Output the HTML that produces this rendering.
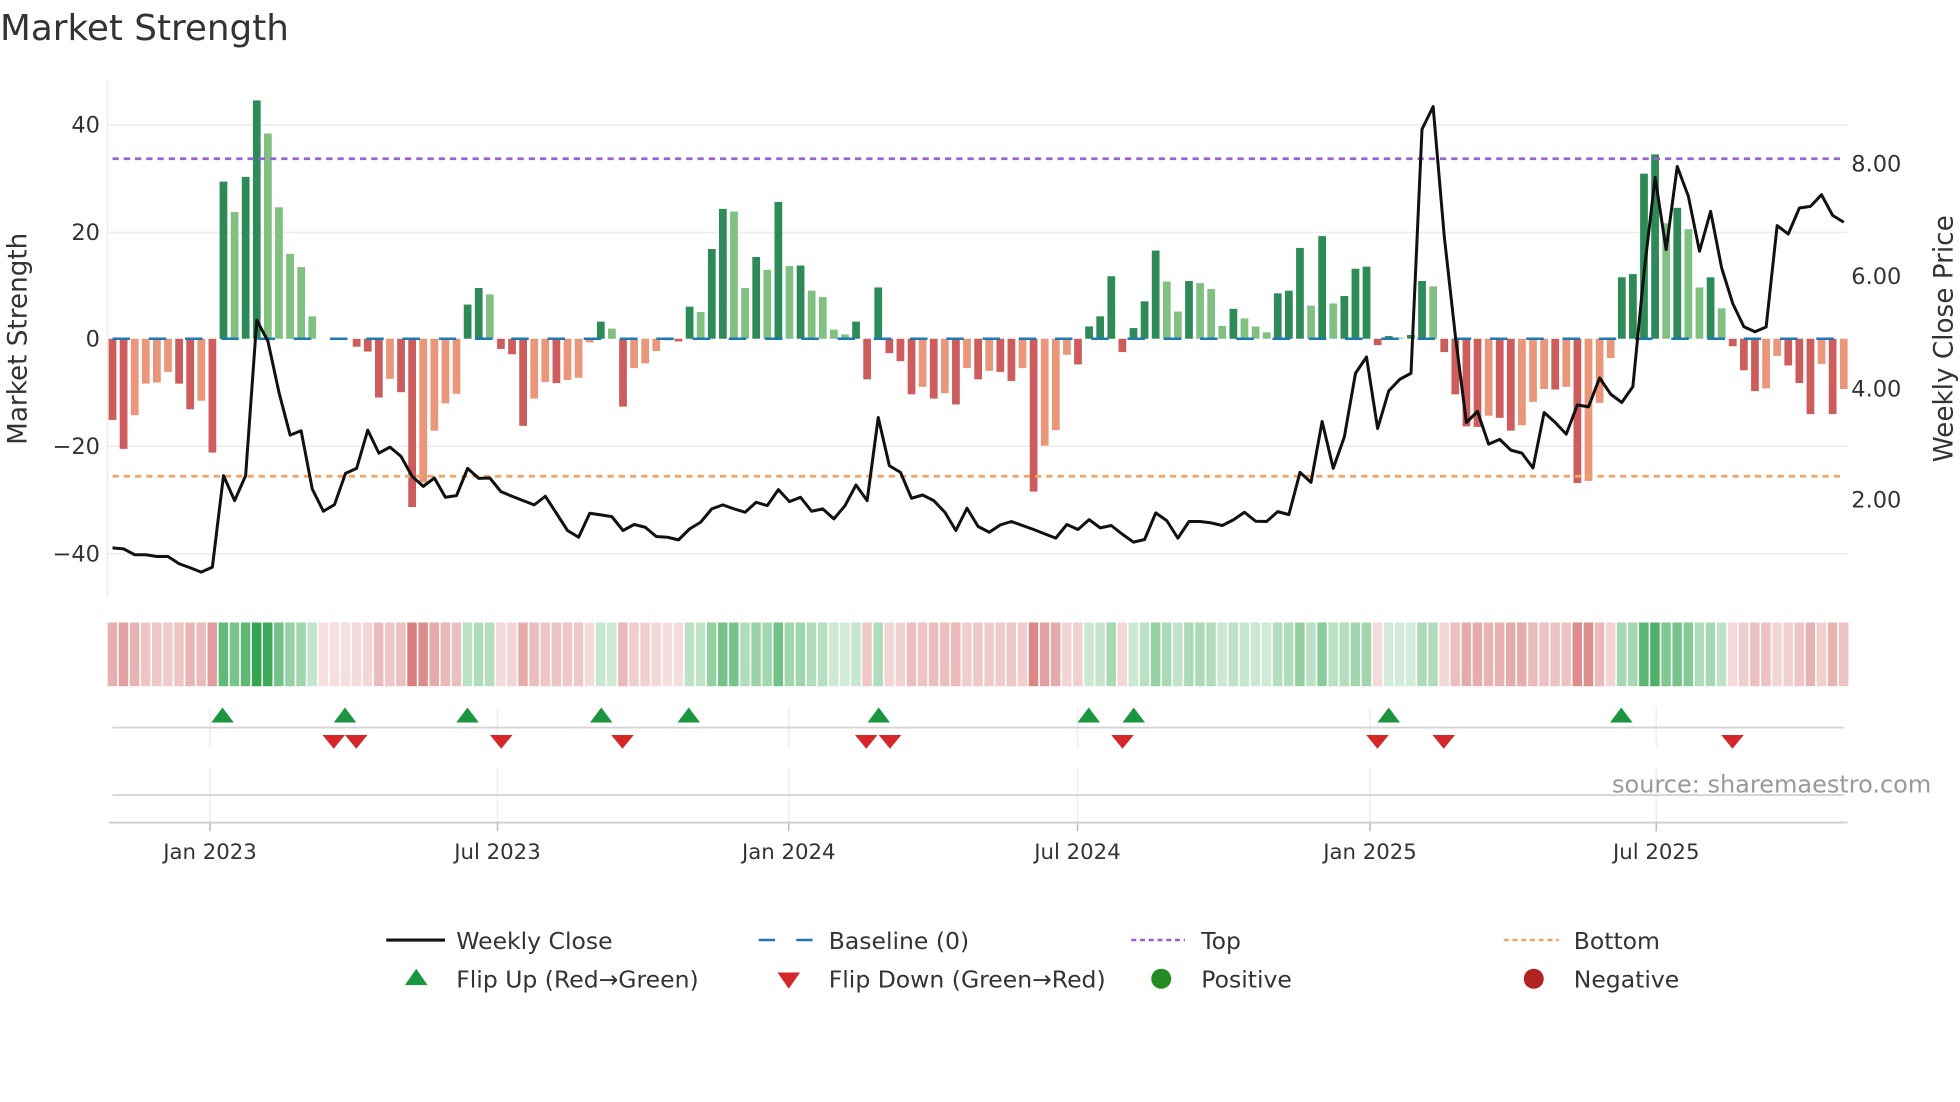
<!DOCTYPE html>
<html><head><meta charset="utf-8"><style>
html,body{margin:0;padding:0;background:#fff;width:1960px;height:1102px;overflow:hidden}
svg{display:block}
text{font-family:"DejaVu Sans","Liberation Sans",sans-serif;fill:#333}
</style></head><body>
<svg id="s" width="1960" height="1102" viewBox="0 0 1568 881.6" xmlns="http://www.w3.org/2000/svg">
<text x="0" y="32" font-size="28.6">Market Strength</text>
<g stroke="#ececec" stroke-width="1.2">
<line x1="86" y1="100" x2="1478" y2="100"/><line x1="86" y1="186" x2="1478" y2="186"/>
<line x1="86" y1="357" x2="1478" y2="357"/><line x1="86" y1="443" x2="1478" y2="443"/>
<line x1="86" y1="65" x2="86" y2="478"/>
</g>
<g font-size="18" text-anchor="end">
<text x="80" y="106">40</text><text x="80" y="192">20</text><text x="80" y="277">0</text>
<text x="80" y="363">−20</text><text x="80" y="449">−40</text>
</g>
<g font-size="18">
<text x="1481" y="137">8.00</text><text x="1481" y="227">6.00</text>
<text x="1481" y="317">4.00</text><text x="1481" y="406">2.00</text>
</g>
<text transform="translate(21,271) rotate(-90)" font-size="21" text-anchor="middle">Market Strength</text>
<text transform="translate(1562,271) rotate(-90)" font-size="21" text-anchor="middle">Weekly Close Price</text>
<g id="bars"></g>
<line x1="90" y1="271" x2="1475" y2="271" stroke="#1f77b4" stroke-width="2" stroke-dasharray="14 15"/>
<line x1="90" y1="127" x2="1475" y2="127" stroke="#9b5fd6" stroke-width="2.2" stroke-dasharray="5 4"/>
<line x1="90" y1="381" x2="1475" y2="381" stroke="#f2a366" stroke-width="2.2" stroke-dasharray="5 4"/>
<polyline id="close" fill="none" stroke="#111" stroke-width="2.4" stroke-linejoin="round"/>
<g id="strip"></g>
<g stroke="#eceef0" stroke-width="1.2">
<line x1="168" y1="566" x2="168" y2="598"/><line x1="398" y1="566" x2="398" y2="598"/><line x1="631" y1="566" x2="631" y2="598"/><line x1="862" y1="566" x2="862" y2="598"/><line x1="1096" y1="566" x2="1096" y2="598"/><line x1="1325" y1="566" x2="1325" y2="598"/>
<line x1="168" y1="614" x2="168" y2="658"/><line x1="398" y1="614" x2="398" y2="658"/><line x1="631" y1="614" x2="631" y2="658"/><line x1="862" y1="614" x2="862" y2="658"/><line x1="1096" y1="614" x2="1096" y2="658"/><line x1="1325" y1="614" x2="1325" y2="658"/>
</g>
<line x1="90" y1="582" x2="1475" y2="582" stroke="#d4d4d4" stroke-width="1.5"/>
<line x1="90" y1="636" x2="1475" y2="636" stroke="#d4d4d4" stroke-width="1.5"/>
<line x1="87" y1="658" x2="1478" y2="658" stroke="#cfcfcf" stroke-width="1.5"/>
<g stroke="#bbb" stroke-width="1.2">
<line x1="168" y1="658" x2="168" y2="665"/><line x1="398" y1="658" x2="398" y2="665"/><line x1="631" y1="658" x2="631" y2="665"/><line x1="862" y1="658" x2="862" y2="665"/><line x1="1096" y1="658" x2="1096" y2="665"/><line x1="1325" y1="658" x2="1325" y2="665"/>
</g>
<g id="marks"></g>
<g font-size="17" text-anchor="middle">
<text x="168" y="687">Jan 2023</text><text x="398" y="687">Jul 2023</text><text x="631" y="687">Jan 2024</text>
<text x="862" y="687">Jul 2024</text><text x="1096" y="687">Jan 2025</text><text x="1325" y="687">Jul 2025</text>
</g>
<text x="1545" y="634" font-size="19.2" text-anchor="end" style="fill:#999">source: sharemaestro.com</text>
<g font-size="18.8">
<line x1="309" y1="752" x2="356" y2="752" stroke="#111" stroke-width="2.5"/>
<text x="365" y="759">Weekly Close</text>
<line x1="607" y1="752" x2="651" y2="752" stroke="#1f77b4" stroke-width="2" stroke-dasharray="13 17"/>
<text x="663" y="759">Baseline (0)</text>
<line x1="905" y1="752" x2="948" y2="752" stroke="#9b5fd6" stroke-width="2" stroke-dasharray="4 3"/>
<text x="961" y="759">Top</text>
<line x1="1203" y1="752" x2="1247" y2="752" stroke="#f2a366" stroke-width="2" stroke-dasharray="4 3"/>
<text x="1259" y="759">Bottom</text>
<polygon points="324,788 342,788 333,775" fill="#1a9641"/>
<text x="365" y="790">Flip Up (Red→Green)</text>
<polygon points="622,778 640,778 631,791" fill="#d62728"/>
<text x="663" y="790">Flip Down (Green→Red)</text>
<circle cx="929" cy="783" r="8" fill="#228b22"/>
<text x="961" y="790">Positive</text>
<circle cx="1227" cy="783" r="8" fill="#b22222"/>
<text x="1259" y="790">Negative</text>
</g>
</svg>
<script>
var V=[-15.2,-20.6,-14.3,-8.4,-8.2,-6.2,-8.4,-13.2,-11.6,-21.3,29.4,23.7,30.3,44.6,38.4,24.6,15.9,13.4,4.2,0,0,0,-1.5,-2.4,-11,-7.5,-10,-31.5,-26.9,-17.2,-12.1,-10.3,6.4,9.5,8.3,-1.9,-2.9,-16.3,-11.2,-8.1,-8.3,-7.7,-7.3,-0.7,3.2,1.9,-12.7,-5.5,-4.6,-2.3,-0.3,-0.5,
6,5,16.8,24.3,23.8,9.5,15.3,12.9,25.6,13.6,13.7,9,7.8,1.7,0.8,3.2,-7.6,9.6,-2.7,-4.2,-10.4,-9,-11.2,-10.2,-12.3,-5.5,-7.6,-6,-6.2,-7.9,-5.5,-28.6,-20,-17.1,-3,-4.8,2.3,4.2,11.7,-2.5,2,7,16.5,10.7,5.1,10.8,10.4,9.3,2.4,5.6,3.8,2.3,
1.2,8.5,9,17,6.2,19.2,6.6,8,13.1,13.5,-1.2,0.5,0.2,0.7,10.8,9.8,-2.5,-10.4,-16.4,-16.5,-14.4,-14.8,-17.2,-16.2,-11.8,-9.4,-9.5,-9,-27,-26.6,-12,-3.6,11.5,12.1,30.9,34.5,21.6,24.5,20.5,9.6,11.5,5.7,-1.4,-5.9,-9.8,-9.3,-3.2,-5,-8.3,-14.1,-4.7,-14.1,-9.4];
var D=[1,1,0,0,0,0,1,1,0,1,1,0,1,1,0,0,0,0,0,0,0,0,1,1,1,0,1,1,0,0,0,0,1,1,0,1,1,1,0,0,1,0,0,0,1,0,1,0,0,0,0,1,
1,0,1,1,0,0,1,0,1,0,1,0,0,0,0,1,1,1,1,1,1,0,1,0,1,0,1,0,1,1,0,1,0,0,0,1,1,1,1,1,1,1,1,0,0,1,0,0,0,1,0,0,
0,1,1,1,0,1,0,1,1,1,1,1,0,1,1,0,1,1,1,1,0,1,1,0,0,0,1,0,1,0,0,0,1,1,1,1,0,1,0,0,1,0,1,1,1,0,0,1,1,1,0,1,0];
var C=[1407,1410,1428,1428,1433,1433,1455,1467,1480,1465,1190,1265,1190,722,785,940,1068,1055,1230,1297,1277,1183,1168,1053,1122,1104,1132,1192,1222,1197,1255,1250,1168,1198,1197,1238,1252,1265,1278,1252,1303,1355,1375,1303,1308,1313,1355,1337,1345,1373,1375,1383,1350,1330,
1290,1278,1290,1300,1270,1280,1232,1268,1255,1297,1290,1320,1280,1218,1265,1015,1160,1180,1258,1248,1265,1300,1355,1288,1343,1360,1338,1328,1340,1352,1365,1378,1337,1352,1322,1347,1340,1366,1390,1382,1302,1325,1378,1328,1328,1332,1340,1323,1300,1327,1328,1298,
1307,1180,1210,1027,1168,1073,882,833,1048,935,900,882,148,80,470,770,1030,997,1095,1081,1113,1122,1167,1000,1030,1065,977,983,896,945,970,922,580,293,510,260,350,515,395,565,672,742,757,743,438,463,385,380,345,407,428];
var N=V.length,step=(1475-90)/(N-1),ns="http://www.w3.org/2000/svg";
function X(i){return 90+step*i}
var bars=document.getElementById('bars'),strip=document.getElementById('strip');
function el(tag,a,p){var e=document.createElementNS(ns,tag);for(var k in a)e.setAttribute(k,a[k]);p.appendChild(e);return e}
for(var i=0;i<N;i++){var v=V[i],x=X(i);
 if(v!==0){var h=Math.abs(v)*4.275,col=v>0?(D[i]?'#2e8b57':'#80c080'):(D[i]?'#cd5c5c':'#e9967a');
  el('rect',{x:(x-3.1).toFixed(2),y:(v>0?271-h:271).toFixed(2),width:6.2,height:h.toFixed(2),fill:col},bars);}
 var a,c;
 if(v>0){a=Math.min(0.95,0.2+0.018*v);c='rgba(40,160,70,'+a.toFixed(3)+')';}
 else{a=Math.min(0.9,0.18+0.017*Math.abs(v));c='rgba(200,75,75,'+a.toFixed(3)+')';}
 el('rect',{x:(x-3.9).toFixed(2),y:498,width:7.6,height:51,fill:c},strip);
}
var pts=[];for(var i=0;i<C.length;i++){pts.push(X(i).toFixed(1)+','+(64+0.266*C[i]).toFixed(1))}
document.getElementById('close').setAttribute('points',pts.join(' '));
var m=document.getElementById('marks');
[178,276,374,481,551,703,871,907,1111,1297].forEach(function(x){el('polygon',{points:(x-9)+',578 '+(x+9)+',578 '+x+',566',fill:'#1a9641'},m)});
[267,285,401,498,693,712,898,1102,1155,1386].forEach(function(x){el('polygon',{points:(x-9)+',588 '+(x+9)+',588 '+x+',599',fill:'#d62728'},m)});
</script>
</body></html>
